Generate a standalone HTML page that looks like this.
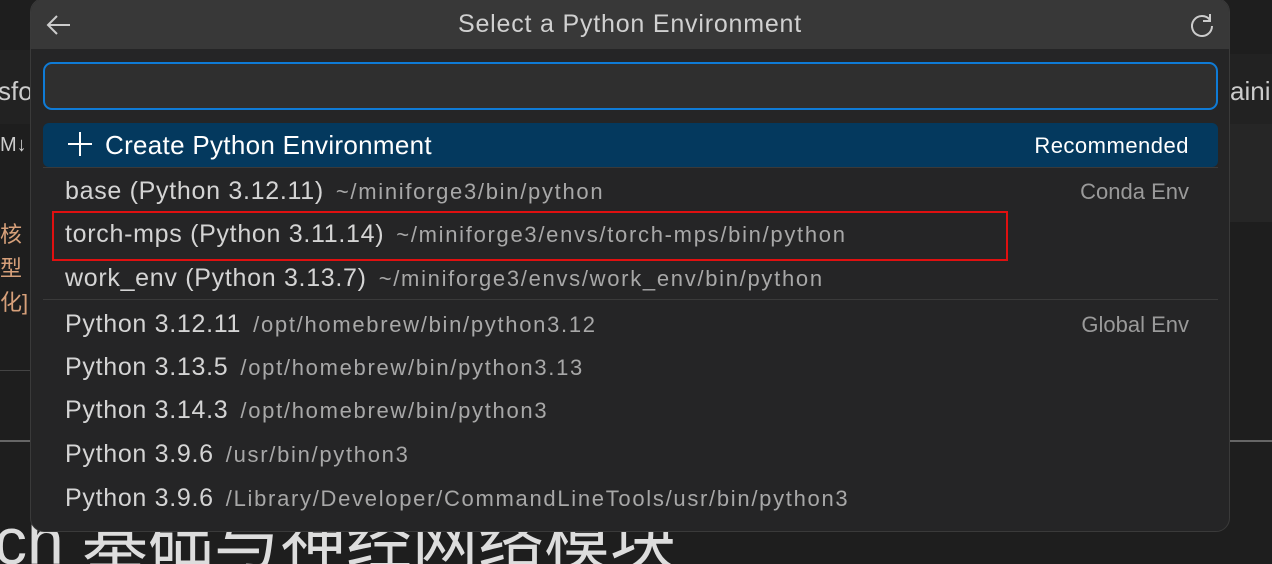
<!DOCTYPE html>
<html><head><meta charset="utf-8"><style>
*{margin:0;padding:0;box-sizing:border-box}
html,body{width:1272px;height:564px;overflow:hidden}
body{background:#1e1e1e;position:relative;font-family:"Liberation Sans","Noto Sans CJK SC",sans-serif;color:#ccc}
.abs{position:absolute}
.dlg{left:30px;top:-2px;width:1200px;height:534px;background:#252526;border-radius:14px;border:1px solid #3a3a3a;overflow:hidden}
.title{left:0;top:0;width:100%;height:50px;background:#383838}
.row{position:absolute;left:34px;font-size:25px;letter-spacing:0.7px;color:#d4d4d4;white-space:nowrap}
.row .p{font-size:22px;letter-spacing:1.7px;color:#a8a8a8;margin-left:12px}
.rt{position:absolute;right:40px;font-size:22px;color:#9a9a9a}
</style></head><body>
<div class="abs" style="left:0;top:50px;width:30px;height:74px;background:#222"></div>
<div class="abs" style="left:-2px;top:76px;font-size:26px;color:#ccc">sfo</div>
<div class="abs" style="left:0;top:134px;font-size:20px;color:#ccc">M↓</div>
<div class="abs" style="left:0;top:218px;font-size:22px;color:#d7a07a;line-height:34px">核<br>型<br>化]</div>
<div class="abs" style="left:0;top:370px;width:30px;height:1px;background:#444"></div>
<div class="abs" style="left:0;top:440px;width:30px;height:2px;background:#666"></div>
<div class="abs" style="left:1230px;top:54px;width:42px;height:70px;background:#222"></div>
<div class="abs" style="left:1230px;top:76px;font-size:26px;color:#ccc">aini</div>
<div class="abs" style="left:1230px;top:124px;width:42px;height:98px;background:#262626"></div>
<div class="abs" style="left:1230px;top:440px;width:42px;height:2px;background:#666"></div>
<div class="abs" style="left:0;top:500px;width:1272px;height:64px;overflow:hidden">
<div class="abs" style="left:-6px;top:2px;font-size:66px;color:#ddd;white-space:nowrap;line-height:1.2">ch 基础与神经网络模块</div>
</div>
<div class="abs dlg">
 <div class="abs title"></div>
 <svg class="abs" style="left:14px;top:13px" width="28" height="26" viewBox="0 0 28 26"><path d="M25 13H3M12 4L3 13l9 9" stroke="#ccc" stroke-width="2" fill="none"/></svg>
 <div class="abs" style="left:0;width:100%;top:11px;text-align:center;font-size:25px;letter-spacing:0.8px;color:#d0d0d0">Select a Python Environment</div>
 <svg class="abs" style="left:1157px;top:12px" width="28" height="28" viewBox="0 0 28 28"><path d="M22 9A10 10 0 1 0 24 15" stroke="#ccc" stroke-width="2" fill="none"/><path d="M22 3v7h-7" stroke="#ccc" stroke-width="2" fill="none"/></svg>
 <div class="abs" style="left:12px;top:63px;width:1175px;height:48px;border:2px solid #0f7bd6;border-radius:9px;background:#2f2f2f"></div>
 <div class="abs" style="left:12px;top:124px;width:1175px;height:44px;background:#04395e;border-radius:6px"></div>
 <svg class="abs" style="left:36px;top:132px" width="26" height="26"><path d="M13 1v24M1 13h24" stroke="#fff" stroke-width="2"/></svg>
 <div class="row" style="left:74px;top:131px;color:#fff;font-size:26px;letter-spacing:0.3px">Create Python Environment</div>
 <div class="rt" style="top:134px;color:#fff;font-size:22px;letter-spacing:0.5px">Recommended</div>
 <div class="abs" style="left:12px;top:168px;width:1175px;height:1px;background:#3a3a3a"></div>
 <div class="row" style="top:178px">base (Python 3.12.11)<span class="p">~/miniforge3/bin/python</span></div>
 <div class="rt" style="top:180px">Conda Env</div>
 <div class="abs" style="left:21px;top:212px;width:956px;height:50px;border:2px solid #e01010"></div>
 <div class="row" style="top:221px">torch-mps (Python 3.11.14)<span class="p">~/miniforge3/envs/torch-mps/bin/python</span></div>
 <div class="row" style="top:265px">work_env (Python 3.13.7)<span class="p">~/miniforge3/envs/work_env/bin/python</span></div>
 <div class="abs" style="left:12px;top:300px;width:1175px;height:1px;background:#3a3a3a"></div>
 <div class="row" style="top:311px">Python 3.12.11<span class="p">/opt/homebrew/bin/python3.12</span></div>
 <div class="rt" style="top:313px">Global Env</div>
 <div class="row" style="top:354px">Python 3.13.5<span class="p">/opt/homebrew/bin/python3.13</span></div>
 <div class="row" style="top:397px">Python 3.14.3<span class="p">/opt/homebrew/bin/python3</span></div>
 <div class="row" style="top:441px">Python 3.9.6<span class="p">/usr/bin/python3</span></div>
 <div class="row" style="top:485px">Python 3.9.6<span class="p">/Library/Developer/CommandLineTools/usr/bin/python3</span></div>
</div>
</body></html>
